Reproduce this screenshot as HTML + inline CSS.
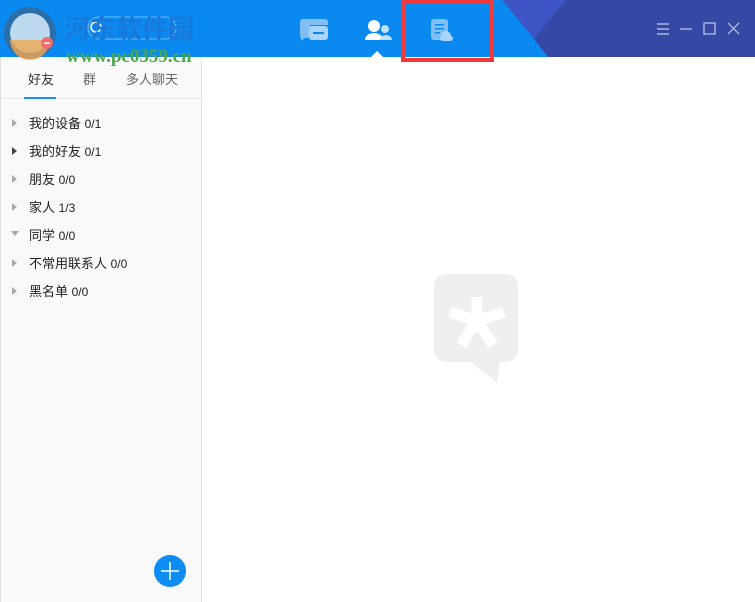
<!DOCTYPE html>
<html><head><meta charset="utf-8"><style>
*{margin:0;padding:0;box-sizing:border-box}
body{width:755px;height:602px;overflow:hidden;background:#fff;font-family:"Liberation Sans","Noto Sans CJK SC",sans-serif;position:relative}
.hdr{position:absolute;left:0;top:0;width:755px;height:57px;background:#0a8af0}
.side{position:absolute;left:0;top:57px;width:202px;height:545px;background:#f9f9f9;border-right:1px solid #e4e4e4;border-left:1px solid #ddd}
.tabs{position:absolute;top:57px;left:0;width:202px;height:42px;border-bottom:1px solid #e6e6e6;font-size:13px;color:#666}
.tabs span{position:absolute;top:12px}
.item{position:absolute;left:29px;font-size:13px;color:#222}
.item small{font-size:12px}
.tri{position:absolute;left:12px;width:0;height:0;border-top:4px solid transparent;border-bottom:4px solid transparent;border-left:5px solid #aaa}
</style></head><body>
<div class="hdr"></div>
<div class="side"></div>
<div class="tabs"><span style="left:28px;color:#333">好友</span><span style="left:83px">群</span><span style="left:126px">多人聊天</span>
<div style="position:absolute;left:24px;top:40px;width:32px;height:2px;background:#1b8cf2"></div></div>
<svg style="position:absolute;left:0;top:0;overflow:visible" width="755" height="57">
<polygon points="502,0 566,0 534,39" fill="#3d55c4"/>
<polygon points="566,0 755,0 755,57 548,57 534,39" fill="#3448a4"/>
<circle cx="30" cy="33" r="26" fill="#2a6fa8"/>
<circle cx="30" cy="33" r="20" fill="#bcd9f0"/>
<path d="M10 40a20 20 0 0 0 40 0z" fill="#f0a850" opacity="0.8"/>
<circle cx="47" cy="43" r="6" fill="#f06b6b"/>
<rect x="44" y="42.5" width="6" height="1.5" fill="#fff"/>
<rect x="88" y="17" width="88" height="22" rx="11" fill="none" stroke="rgba(255,255,255,0.4)"/>
<circle cx="96" cy="27" r="5" fill="none" stroke="#fff" stroke-width="1.5"/>
<text x="64" y="38" font-size="26" font-weight="bold" fill="#1a78d8" font-family="Noto Sans CJK SC,sans-serif">河东软件园</text>
<text x="66" y="62" font-size="19" font-weight="bold" fill="#4aa84a" font-family="Liberation Serif,serif">www.pc0359.cn</text>
<path d="M303 19h22a3 3 0 0 1 3 3v3h-18v13h-5l-4 3v-3a3 3 0 0 1-1-2v-14a3 3 0 0 1 3-3z" fill="#7fbff5"/>
<rect x="309" y="26" width="19" height="14" rx="3" fill="#a9d4f9"/>
<rect x="313" y="32" width="11" height="2" fill="#0a8af0"/>
<circle cx="374" cy="26" r="6" fill="#fff"/>
<path d="M365 40a9 7 0 0 1 18 0z" fill="#fff"/>
<circle cx="385" cy="29" r="4" fill="#bfe0fb"/>
<path d="M380 40a6 5 0 0 1 12 0z" fill="#bfe0fb"/>
<polygon points="371,57 377,51 383,57" fill="#fff"/>
<rect x="431" y="19" width="17" height="21" rx="3" fill="#7fbff5"/>
<rect x="435" y="24" width="9" height="1.5" fill="#0a8af0"/><rect x="435" y="28" width="9" height="1.5" fill="#0a8af0"/><rect x="435" y="32" width="5" height="1.5" fill="#0a8af0"/>
<circle cx="446" cy="36" r="5" fill="#a9d4f9"/><rect x="440" y="36" width="13" height="5" rx="2.5" fill="#a9d4f9"/>
<rect x="403" y="2" width="89" height="58" fill="none" stroke="#f23a3a" stroke-width="4"/>
<g stroke="#c5cbe8" stroke-width="1.2" fill="none">
<path d="M657 24h12M657 29h12M657 34h12"/><path d="M680 29h12"/><rect x="704" y="23" width="11" height="11"/><path d="M728 23l11 11M739 23l-11 11"/></g>
</svg>
<div class="tri" style="top:119px"></div><div class="item" style="top:113px">我的设备 <small>0/1</small></div>
<div class="tri" style="top:147px;border-left-color:#444"></div><div class="item" style="top:141px">我的好友 <small>0/1</small></div>
<div class="tri" style="top:175px"></div><div class="item" style="top:169px">朋友 <small>0/0</small></div>
<div class="tri" style="top:203px"></div><div class="item" style="top:197px">家人 <small>1/3</small></div>
<div style="position:absolute;left:11px;top:231px;border-left:4px solid transparent;border-right:4px solid transparent;border-top:5px solid #aaa"></div><div class="item" style="top:225px">同学 <small>0/0</small></div>
<div class="tri" style="top:259px"></div><div class="item" style="top:253px">不常用联系人 <small>0/0</small></div>
<div class="tri" style="top:287px"></div><div class="item" style="top:281px">黑名单 <small>0/0</small></div>
<svg style="position:absolute;left:150px;top:551px" width="40" height="40"><circle cx="20" cy="20" r="16" fill="#0e8cf5"/><path d="M20 11v18M11 20h18" stroke="#fff" stroke-width="1.5"/></svg>
<svg style="position:absolute;left:430px;top:270px" width="100" height="120">
<path d="M16 4h60a12 12 0 0 1 12 12v64a12 12 0 0 1-12 12h-6l-3 21-26-21h-25a12 12 0 0 1-12-12v-64a12 12 0 0 1 12-12z" fill="#efefef"/>
<g stroke="#fff" stroke-width="11"><path d="M47 27v30"/><path d="M47 51l-27-9M47 51l27-9M47 51l-16 24M47 51l16 24"/></g>
</svg>
</body></html>
